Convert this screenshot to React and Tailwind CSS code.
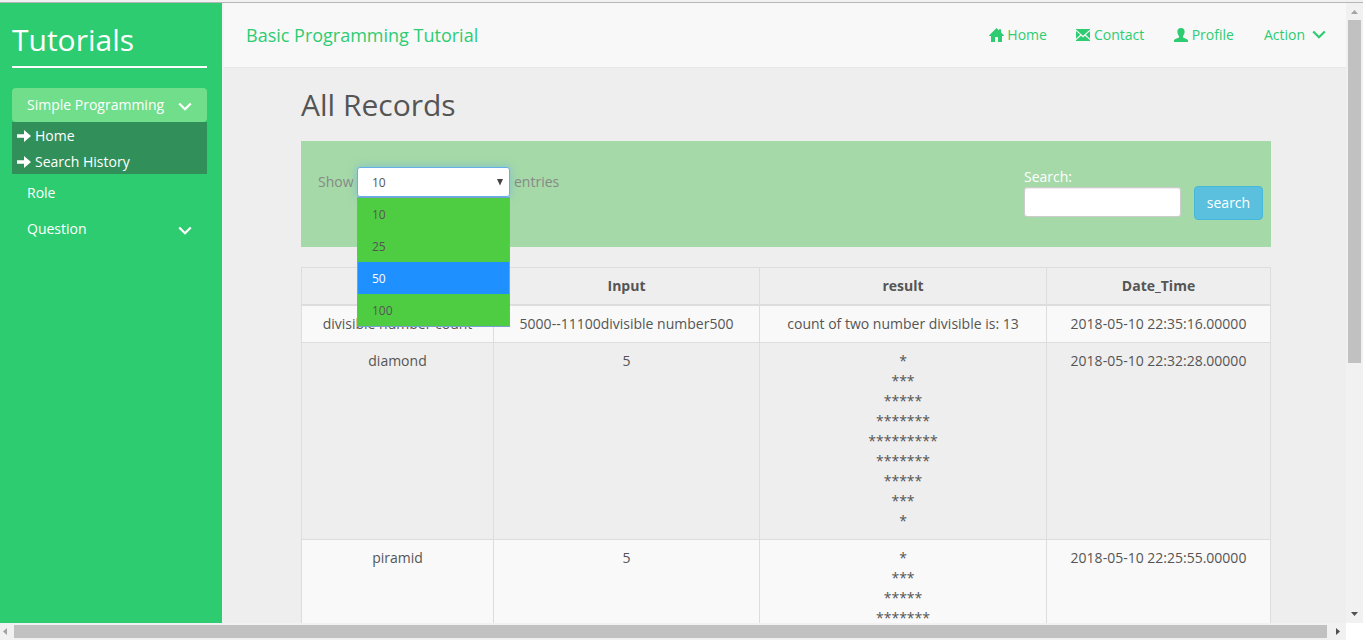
const Chevron = ({ className }) => (
  <svg className={className} width="14" height="9" viewBox="0 0 14 9" fill="none" stroke="currentColor" strokeWidth="2.2">
    <path d="M1.2 1.5 L7 7.2 L12.8 1.5" />
  </svg>
);

const Arrow = () => (
  <svg width="14" height="12" viewBox="0 0 14 12" fill="currentColor">
    <path d="M0 4.2H7V0L14 6 7 12V7.8H0z" />
  </svg>
);

const HomeIcon = () => (
  <svg width="15" height="14" viewBox="0 0 15 14" fill="currentColor">
    <path d="M7.5 0 L10 2.4V1.2H12V4.3L15 7.4V8H13V14H9V9H6V14H2V8H0V7.4z" />
  </svg>
);

const MailIcon = () => (
  <svg width="14" height="12" viewBox="0 0 14 12" fill="currentColor">
    <path d="M0 0H14V.4L7 6.700 0 .4zM0 2L4.200 5.800 0 9.800zM14 2V9.800L9.800 5.800zM0 12V11.200L5.100 6.700 7 8.400 8.900 6.700 14 11.200V12z" />
  </svg>
);

const UserIcon = () => (
  <svg width="14" height="14" viewBox="0 0 14 14" fill="currentColor">
    <path d="M7 0C9.500 0 10.600 1.400 10.600 3.600 10.600 5.600 9.800 7.200 9 8V9.300C9.800 10.400 14 10.800 14 12.600V14H0V12.600C0 10.800 4.200 10.400 5 9.300V8C4.200 7.200 3.400 5.600 3.400 3.600 3.400 1.400 4.500 0 7 0z" />
  </svg>
);

const links = [
  { label: "Home", Icon: HomeIcon, style: "gap-[3px] -mr-px" },
  { label: "Contact", Icon: MailIcon, style: "gap-[4px] -mr-[0.5px]" },
  { label: "Profile", Icon: UserIcon, style: "gap-[4px]" },
];

const stars = (counts) => counts.map((n) => "*".repeat(n));

const rows = [
  {
    name: "divisible number count",
    input: "5000--11100divisible number500",
    result: ["count of two number divisible is: 13"],
    date: "2018-05-10 22:35:16.00000",
    style: "h-[37px] bg-[#f9f9f9]",
  },
  {
    name: "diamond",
    input: "5",
    result: stars([1, 3, 5, 7, 9, 7, 5, 3, 1]),
    date: "2018-05-10 22:32:28.00000",
    style: "h-[197px]",
  },
  {
    name: "piramid",
    input: "5",
    result: stars([1, 3, 5, 7]),
    date: "2018-05-10 22:25:55.00000",
    style: "h-[117px] bg-[#f9f9f9]",
  },
];

const cell = "border-r border-[#ddd] pt-2";

function Sidebar() {
  return (
    <aside className="w-[222px] shrink-0 bg-[#2ecc71] px-3 text-white">
      <h1 className="h-[65px] w-[195px] border-b-2 border-white pt-[17px] text-[30px] leading-[40px]">
        Tutorials
      </h1>
      <nav className="mt-5 w-[195px]">
        <div className="flex h-[34px] items-center justify-between rounded bg-[#71de8b] px-[15px]">
          <span>Simple Programming</span>
          <Chevron className="mt-[3px]" />
        </div>
        <div className="h-[52px] bg-[#318f5a] pl-[5px]">
          {["Home", "Search History"].map((t) => (
            <div key={t} className="flex h-[26px] items-center gap-1 pt-0.5">
              <Arrow />
              <span>{t}</span>
            </div>
          ))}
        </div>
        <div className="flex h-[36px] items-center px-[15px] pt-0.5">Role</div>
        <div className="flex h-[36px] items-center justify-between px-[15px] pt-0.5">
          <span>Question</span>
          <Chevron className="mt-[3px]" />
        </div>
      </nav>
    </aside>
  );
}

function Navbar() {
  return (
    <header className="flex h-[65px] items-center justify-between border-b border-[#e7e7e7] bg-[#f8f8f8] pl-[22px] pr-5 text-[#2ecc71]">
      <div className="text-lg leading-5">Basic Programming Tutorial</div>
      <nav className="flex items-center gap-[30px]">
        {links.map(({ label, Icon, style }) => (
          <a key={label} className={`flex items-center ${style}`}>
            <Icon />
            <span>{label}</span>
          </a>
        ))}
        <a className="flex items-center gap-[7px]">
          <span>Action</span>
          <Chevron className="-mt-[2px]" />
        </a>
      </nav>
    </header>
  );
}

function EntriesSelect() {
  return (
    <div className="relative h-[30px] w-[153px]">
      <div className="flex h-full items-center justify-between rounded-[3px] border border-[#66afe9] bg-white pl-[14px] pr-[6px] text-xs text-[#555] shadow-[0_0_8px_rgba(102,175,233,0.6)]">
        <span className="pt-0.5">10</span>
        <svg width="6" height="7" viewBox="0 0 6 7" fill="#444">
          <path d="M0 0H6L3 6.500z" />
        </svg>
      </div>
      <ul className="absolute left-0 top-[30px] z-10 w-[153px] border border-[#7a9fd0] bg-[#4ecd43] text-xs text-[#555]">
        <li className="flex h-8 items-center pl-[14px] pt-0.5">10</li>
        <li className="flex h-8 items-center pl-[14px] pt-0.5">25</li>
        <li className="flex h-8 items-center bg-[#1e90ff] pl-[14px] pt-0.5 text-white">50</li>
        <li className="flex h-8 items-center pl-[14px] pt-0.5">100</li>
      </ul>
    </div>
  );
}

function Filters() {
  return (
    <section className="flex h-[106px] justify-between bg-[#a5d9a7] pl-[17px] pr-2">
      <div className="mt-[26px] flex h-[30px] items-center gap-1 text-[#888]">
        <span className="w-[35px]">Show</span>
        <EntriesSelect />
        <span>entries</span>
      </div>
      <div className="flex items-start">
        <label className="mt-[26px] block w-[157px] text-white">
          <span className="block h-5">Search:</span>
          <span className="block h-[30px] rounded-[3px] border border-[#ccc] bg-white shadow-[inset_0_1px_1px_rgba(0,0,0,0.075)]" />
        </label>
        <button className="ml-[13px] mt-[45px] h-[34px] w-[69px] rounded border border-[#46b8da] bg-[#5bc0de] text-white">
          search
        </button>
      </div>
    </section>
  );
}

function Records() {
  return (
    <section className="mt-5 w-[970px] border-l border-t border-[#ddd] text-center">
      <div className="grid h-[38px] grid-cols-[192px_266px_287px_224px] border-b-2 border-[#ddd] font-bold">
        <div className={cell} />
        <div className={cell}>Input</div>
        <div className={cell}>result</div>
        <div className={cell}>Date_Time</div>
      </div>
      {rows.map((r) => (
        <div key={r.name} className={`grid grid-cols-[192px_266px_287px_224px] border-b border-[#ddd] ${r.style}`}>
          <div className={cell}>{r.name}</div>
          <div className={cell}>{r.input}</div>
          <div className={cell}>
            {r.result.map((line, i) => (
              <div key={i}>{line}</div>
            ))}
          </div>
          <div className={cell}>{r.date}</div>
        </div>
      ))}
    </section>
  );
}

export default function App() {
  return (
    <div className="flex h-[640px] w-[1366px] flex-col overflow-hidden bg-white pr-[3px] font-['Open_Sans',sans-serif] text-sm leading-5 text-[#555]">
      <div className="h-[3px] shrink-0 border-b border-[#b6b6b6] bg-[#f1f1f1]" />
      <div className="flex h-[620px] overflow-hidden">
        <Sidebar />
        <main className="w-[1124px] shrink-0 overflow-hidden bg-[#eee]">
          <div className="border-l-2 border-[#f3f3f3]">
            <Navbar />
          </div>
          <div className="pl-[79px]">
            <div className="w-[970px]">
              <h2 className="h-[73px] pt-[20px] text-[30px] leading-[33px]">All Records</h2>
              <Filters />
              <Records />
            </div>
          </div>
        </main>
        <div className="flex w-[17px] shrink-0 flex-col items-center bg-[#f1f1f1]">
          <svg className="mt-[7px] shrink-0" width="7" height="4" fill="#a3a3a3">
            <path d="M0 4L3.500 0 7 4z" />
          </svg>
          <div className="mt-[6px] h-[343px] w-[13px] shrink-0 bg-[#c1c1c1]" />
          <svg className="mb-[7px] mt-auto shrink-0" width="7" height="4" fill="#505050">
            <path d="M0 0L3.500 4 7 0z" />
          </svg>
        </div>
      </div>
      <div className="flex h-[17px] w-[1346px] items-center bg-[#f1f1f1]">
        <svg className="ml-[3px]" width="4" height="7" fill="#a3a3a3">
          <path d="M4 0L0 3.500 4 7z" />
        </svg>
        <div className="ml-[7px] h-[13px] w-[1313px] bg-[#c1c1c1]" />
        <svg className="ml-[9px]" width="4" height="7" fill="#505050">
          <path d="M0 0L4 3.500 0 7z" />
        </svg>
      </div>
    </div>
  );
}
